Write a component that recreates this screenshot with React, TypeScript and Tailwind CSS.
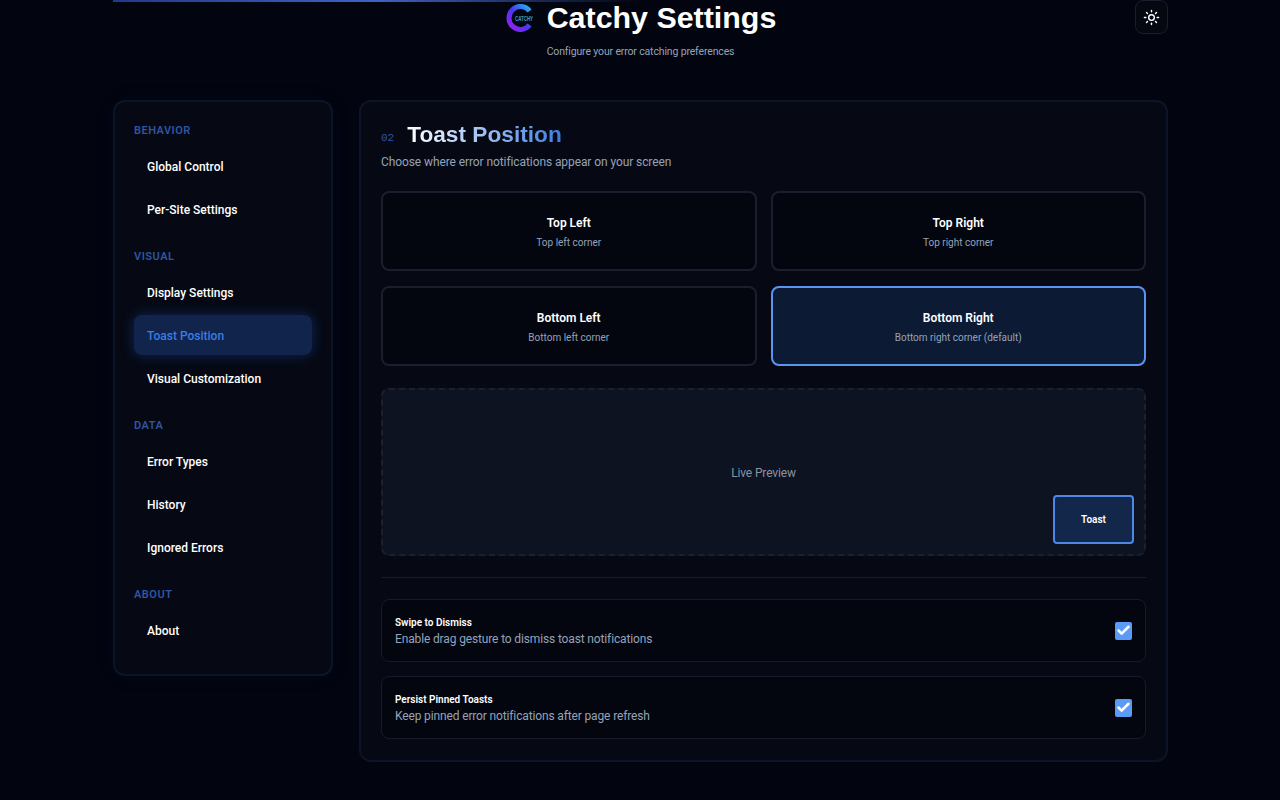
import { Sun, Check } from "lucide-react";

const nav = [
  { label: "BEHAVIOR", items: ["Global Control", "Per-Site Settings"] },
  { label: "VISUAL", items: ["Display Settings", "Toast Position", "Visual Customization"] },
  { label: "DATA", items: ["Error Types", "History", "Ignored Errors"] },
  { label: "ABOUT", items: ["About"] },
];

const positions = [
  { title: "Top Left", sub: "Top left corner" },
  { title: "Top Right", sub: "Top right corner" },
  { title: "Bottom Left", sub: "Bottom left corner" },
  { title: "Bottom Right", sub: "Bottom right corner (default)", active: true },
];

const toggles = [
  { title: "Swipe to Dismiss", sub: "Enable drag gesture to dismiss toast notifications" },
  { title: "Persist Pinned Toasts", sub: "Keep pinned error notifications after page refresh" },
];

function Logo() {
  return (
    <svg width="30" height="32" viewBox="0 0 30 32" className="shrink-0 overflow-visible">
      <defs>
        <linearGradient id="logoGrad" x1="1" y1="0" x2="0" y2="1">
          <stop offset="0" stopColor="#1fb6f0" />
          <stop offset="0.5" stopColor="#4a35f0" />
          <stop offset="1" stopColor="#9a1ff0" />
        </linearGradient>
      </defs>
      <path
        d="M23.56 8.92A11.5 11.5 0 1 0 23.56 23.08"
        fill="none"
        stroke="url(#logoGrad)"
        strokeWidth="5"
      />
      <text x="9" y="19" fontSize="7" fontWeight="700" fill="#3f9fc4" fontFamily="Liberation Sans, sans-serif" textLength="18" lengthAdjust="spacingAndGlyphs">
        CATCHY
      </text>
    </svg>
  );
}

export default function App() {
  return (
    <div className="min-h-screen bg-[#02040f] font-['Roboto',sans-serif] text-white">
      <div className="relative ml-[113px] w-[1055px] pb-[38px]">
        <div className="absolute top-0 left-0 h-[2px] w-[527px] bg-gradient-to-r from-[#1e3a8a] via-[#3f63c4] to-transparent"></div>

        <header className="relative flex h-[100px] flex-col items-center">
          <div className="flex h-[35px] items-center gap-[11px] pl-[1px]">
            <Logo />
            <h1 className="font-['Liberation_Sans',sans-serif] text-[30.4px] leading-[35px] font-bold">Catchy Settings</h1>
          </div>
          <p className="mt-[9px] text-[10.5px] leading-[16px] tracking-[-0.15px] text-[#94a3b8]">Configure your error catching preferences</p>
          <button className="absolute top-0 right-0 flex h-[34px] w-[33px] items-center justify-center rounded-lg border border-[#1a1f2e] bg-[#050811]">
            <Sun size={17} strokeWidth={2} className="text-white" />
          </button>
        </header>

        <div className="flex items-start gap-[26px]">
          <aside className="h-[576px] w-[220px] shrink-0 rounded-xl border-2 border-[#0c1528] bg-[#060913] px-[19px] pt-[20px] shadow-[0_0_20px_rgba(30,58,138,0.08)]">
            {nav.map((group) => (
              <div key={group.label} className="mb-[19px]">
                <div className="mb-[6px] h-[18px] text-[11px] leading-[18px] font-semibold tracking-[0.5px] text-[#2f55a4]">{group.label}</div>
                <div className="flex flex-col gap-[3px]">
                  {group.items.map((item) =>
                    item === "Toast Position" ? (
                      <div
                        key={item}
                        className="flex h-[40px] items-center rounded-lg bg-[#10244c] pt-px pl-[13px] text-[12px] font-medium text-[#3b7de0] shadow-[0_0_14px_rgba(37,99,235,0.32)]"
                      >
                        {item}
                      </div>
                    ) : (
                      <div key={item} className="flex h-[40px] items-center pt-px pl-[13px] text-[12px] font-medium text-white">
                        {item}
                      </div>
                    )
                  )}
                </div>
              </div>
            ))}
          </aside>

          <main className="h-[662px] flex-1 rounded-xl border-2 border-[#0c1528] bg-[#060913] px-[20px] pt-[18px]">
            <div className="flex items-end gap-[13px]">
              <span className="pb-px font-['Liberation_Mono',monospace] text-[11px] leading-[17px] text-[#2f55a4]">02</span>
              <h2 className="bg-gradient-to-r from-white to-[#3b7de0] bg-clip-text font-['Liberation_Sans',sans-serif] text-[22.7px] leading-[28px] font-bold text-transparent">
                Toast Position
              </h2>
            </div>
            <p className="mt-[4px] text-[12px] leading-[20px] tracking-[-0.09px] text-[#94a3b8]">Choose where error notifications appear on your screen</p>

            <div className="mt-[19px] grid grid-cols-2 gap-x-[14px] gap-y-[15px]">
              {positions.map((p) => (
                <div
                  key={p.title}
                  className={
                    p.active
                      ? "flex h-[80px] flex-col items-center justify-center rounded-lg border-2 border-[#5b93f0] bg-[#0c1a33] pt-[4px]"
                      : "flex h-[80px] flex-col items-center justify-center rounded-lg border-2 border-[#1a1f2e] bg-[#04060f] pt-[4px]"
                  }
                >
                  <div className="text-[12px] leading-[20px] font-semibold">{p.title}</div>
                  <div className="text-[10px] leading-[20px] text-[#94a3b8]">{p.sub}</div>
                </div>
              ))}
            </div>

            <div className="relative mt-[22px] flex h-[168px] items-center justify-center rounded-lg border-2 border-dashed border-[#1a2030] bg-[#0d1320] pt-[1px]">
              <span className="text-[12px] tracking-[-0.15px] text-[#8b93a3]">Live Preview</span>
              <div className="absolute right-[10px] bottom-[10px] flex h-[49px] w-[81px] items-center justify-center rounded border-2 border-[#4f86e8] bg-[#13274a] text-[10px] font-semibold text-white">
                Toast
              </div>
            </div>

            <div className="mt-[21px] h-px bg-[#161b29]"></div>

            <div className="mt-[21px] flex flex-col gap-[14px]">
              {toggles.map((t) => (
                <div key={t.title} className="flex h-[63px] items-center justify-between rounded-lg border border-[#161b29] bg-[#04060f] pr-[13px] pl-[13px]">
                  <div>
                    <div className="text-[10px] leading-[16px] font-semibold text-white">{t.title}</div>
                    <div className="text-[12px] leading-[16px] tracking-[-0.14px] text-[#94a3b8]">{t.sub}</div>
                  </div>
                  <div className="flex h-[18px] w-[17px] items-center justify-center rounded-[2px] bg-[#5b9bf8]">
                    <Check size={15} strokeWidth={4} className="text-white" />
                  </div>
                </div>
              ))}
            </div>
          </main>
        </div>
      </div>
    </div>
  );
}
